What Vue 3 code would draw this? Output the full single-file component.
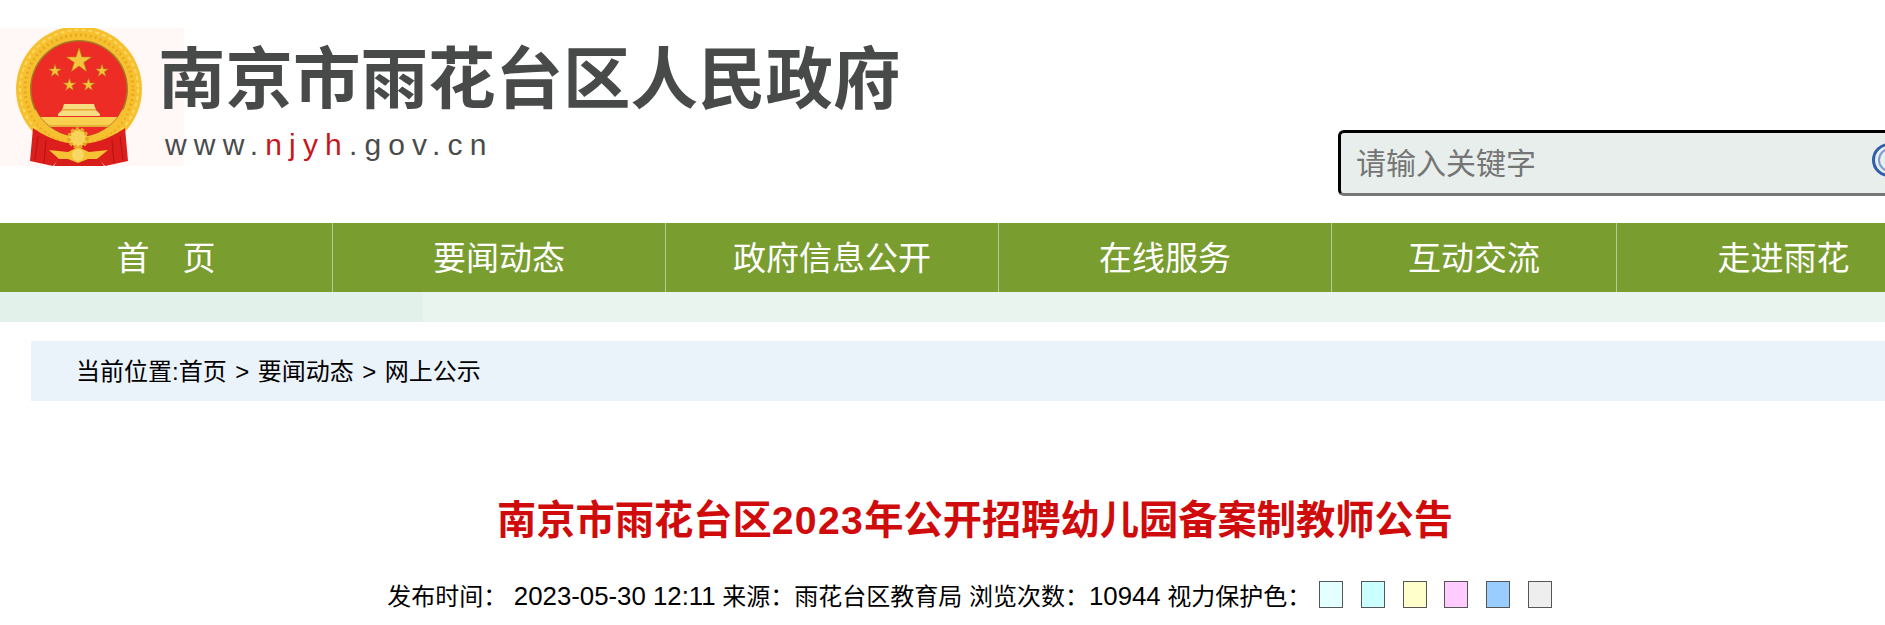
<template>
  <div class="page">
    <!-- 头部 logo 与搜索 -->
    <header class="top">
      <div class="logo">
        <div class="emblem">
          <svg width="184" height="138" viewBox="0 0 184 138">
            <defs>
              <clipPath id="faceClip"><circle cx="79" cy="61" r="47.5" /></clipPath>
            </defs>
            <!-- 外圈麦穗 -->
            <circle cx="79" cy="61" r="63" fill="#f6c030" />
            <circle cx="79" cy="61" r="59" fill="none" stroke="#fbd860" stroke-width="2" stroke-dasharray="4 3" />
            <circle cx="79" cy="61" r="54" fill="none" stroke="#e8a91f" stroke-width="3" stroke-dasharray="2 3" />
            <!-- 红绸 -->
            <path d="M33 100L30 133L53 138L60 130H98L105 138L128 133L125 100Q79 132 33 100Z" fill="#dc1f1c" />
            <path d="M60 128H98L104 138H54Z" fill="#d81e1b" />
            <path d="M38 108l-3 24M46 112l-2 23M120 108l3 24M112 112l2 23" stroke="#b91414" stroke-width="1.2" fill="none" />
            <!-- 内环 -->
            <circle cx="79" cy="61" r="49" fill="#a67a22" />
            <path d="M33 83A51 51 0 0 0 125 83" fill="none" stroke="#f6c030" stroke-width="6" />
            <circle cx="79" cy="61" r="47.5" fill="#ec2c25" />
            <!-- 五星 -->
            <polygon v-for="s in stars" :key="s.x" :points="starPoints(s.x, s.y, s.r)" fill="#f5c63c" stroke="#b8841c" stroke-width="0.6" />
            <!-- 天安门 -->
            <g clip-path="url(#faceClip)">
              <path d="M64 76H94L96 82L100 86V88H58V86L62 82Z" fill="#f8dc82" />
              <rect x="62" y="81" width="34" height="1.5" fill="#e4a92e" />
              <rect x="30" y="89" width="98" height="10" fill="#f8cf4e" />
              <rect x="30" y="97" width="98" height="2" fill="#e4b03a" />
            </g>
            <!-- 齿轮与绶带 -->
            <circle cx="78" cy="110" r="9" fill="#f8d35a" stroke="#e5a824" stroke-width="3.5" stroke-dasharray="3 2" />
            <path d="M49 122L68 124L78 119L89 124L108 122L97 131H88L78 135L68 131H59Z" fill="#f5c233" />
            <circle cx="78" cy="127" r="6" fill="#f9d765" />
          </svg>
        </div>
        <div class="logo-text">
          <div class="site-name">南京市雨花台区人民政府</div>
          <div class="site-url">www.<span class="red">njyh</span>.gov.cn</div>
        </div>
      </div>
      <div class="search">
        <input class="search-input" type="text" placeholder="请输入关键字" />
        <svg class="search-icon" width="40" height="40" viewBox="0 0 40 40">
          <circle cx="19" cy="19" r="15.5" fill="none" stroke="#2f5da8" stroke-width="3" />
          <circle cx="20" cy="19" r="11" fill="none" stroke="#7c9bd0" stroke-width="2" />
        </svg>
      </div>
    </header>

    <!-- 导航 -->
    <nav class="nav">
      <a v-for="item in navItems" :key="item.name" class="nav-item" :class="item.cls">{{ item.name }}</a>
    </nav>
    <div class="strip"><div class="strip-left"></div></div>

    <div class="crumb">当前位置:首页<span class="sep">&gt;</span>要闻动态<span class="sep">&gt;</span>网上公示</div>

    <div class="article-head">
      <h1 class="title">南京市雨花台区<span class="title-num">2023</span>年公开招聘幼儿园备案制教师公告</h1>

      <div class="meta">
        <span>发布时间： <span class="num">2023-05-30 12:11</span> 来源：雨花台区教育局 浏览次数：<span class="num">10944</span> 视力保护色：</span>
        <div class="swatches">
          <i v-for="c in swatches" :key="c" class="swatch" :class="c"></i>
        </div>
      </div>
    </div>
  </div>
</template>

<script setup>
const navItems = [
  { name: '首　页' },
  { name: '要闻动态' },
  { name: '政府信息公开' },
  { name: '在线服务' },
  { name: '互动交流', cls: 'short' },
  { name: '走进雨花' },
]

const swatches = ['c1', 'c2', 'c3', 'c4', 'c5', 'c6']

const stars = [
  { x: 79, y: 33, r: 13 },
  { x: 55, y: 43, r: 6.5 },
  { x: 102, y: 43, r: 6.5 },
  { x: 69.5, y: 57, r: 6.5 },
  { x: 88.5, y: 57, r: 6.5 },
]

const starPoints = (x, y, r) => {
  const pts = []
  for (let i = 0; i < 10; i++) {
    const len = i % 2 ? r * 0.38 : r
    const a = (Math.PI / 5) * i - Math.PI / 2
    pts.push((x + len * Math.cos(a)).toFixed(1) + ',' + (y + len * Math.sin(a)).toFixed(1))
  }
  return pts.join(' ')
}
</script>

<style>
html, body {
  overflow: hidden;
  background: #fff;
}
</style>

<style scoped>
.page {
  width: 1885px;
  height: 625px;
  overflow: hidden;
  font-family: "Liberation Sans", "Noto Sans CJK SC", sans-serif;
  color: #000;
}

.top {
  display: flex;
  justify-content: space-between;
  height: 223px;
  position: relative;
}

.logo {
  display: flex;
  padding-top: 28px;
  height: 138px;
}

.emblem {
  width: 184px;
  height: 138px;
  background: #fff8f7;
  flex-shrink: 0;
  margin-right: -26px;
}

.emblem svg {
  display: block;
}

.site-name {
  font-size: 67.5px;
  font-weight: 700;
  line-height: 74px;
  margin-top: 9px;
  color: #474a49;
  white-space: nowrap;
  font-family: "Noto Sans CJK SC", sans-serif;
}

.site-url {
  font-family: "Liberation Sans", sans-serif;
  font-size: 30px;
  line-height: 32px;
  margin: 18px 0 0 7px;
  letter-spacing: 7.15px;
  color: #4a4c4c;
  white-space: nowrap;
}

.red {
  color: #c8161d;
}

.search {
  position: absolute;
  left: 1338px;
  top: 130px;
  width: 600px;
  height: 66px;
}

.search-input {
  box-sizing: border-box;
  width: 100%;
  height: 100%;
  padding: 0 0 4px 15px;
  border: 3px inset #767676;
  border-color: #1a1a1a #767676 #767676 #1a1a1a;
  border-radius: 6px;
  background: #e8eeeb;
  font-size: 30px;
  font-family: "Noto Sans CJK SC", sans-serif;
  outline: none;
}

.search-input::placeholder {
  color: #757575;
}

.search-icon {
  position: absolute;
  left: 532px;
  top: 11px;
}

.nav {
  display: flex;
  height: 69px;
  background: #7a9d30;
  width: 1950px;
}

.nav-item {
  box-sizing: border-box;
  width: 333px;
  border-right: 1px solid #b9c99a;
  line-height: 67px;
  font-size: 33px;
  color: #fff;
  text-align: center;
  font-family: "Noto Sans CJK SC", sans-serif;
  white-space: nowrap;
}

.nav-item.short {
  width: 285px;
}

.nav-item:last-child {
  border-right: none;
}

.strip {
  height: 30px;
  background: #eaf4ef;
}

.strip-left {
  width: 423px;
  height: 100%;
  background: #e2f1ea;
}

.crumb {
  margin: 19px 0 0 31px;
  height: 60px;
  line-height: 62px;
  padding-left: 45px;
  background: #eaf2fa;
  font-size: 24px;
  white-space: nowrap;
}

.sep {
  margin: 0 8.5px;
}

.article-head {
  width: 1950px;
  text-align: center;
}

.title {
  margin: 91px 0 0;
  font-size: 39.25px;
  line-height: 56px;
  font-weight: 700;
  color: #d00b0b;
  white-space: nowrap;
}

.title-num {
  letter-spacing: 1.3px;
}

.meta {
  display: flex;
  justify-content: center;
  align-items: center;
  height: 40px;
  margin-top: 26px;
  padding-right: 11px;
  font-size: 24px;
  white-space: nowrap;
}

.num {
  font-size: 25.8px;
}

.swatches {
  display: flex;
  gap: 17.7px;
  margin-left: 8px;
}

.swatch {
  box-sizing: border-box;
  display: block;
  width: 24px;
  height: 27px;
  border: 1px solid #555;
}

.c1 { background: #e3ffff; }
.c2 { background: #ccffff; }
.c3 { background: #ffffcc; }
.c4 { background: #ffccff; }
.c5 { background: #99ccff; }
.c6 { background: #eeeeee; }
</style>
